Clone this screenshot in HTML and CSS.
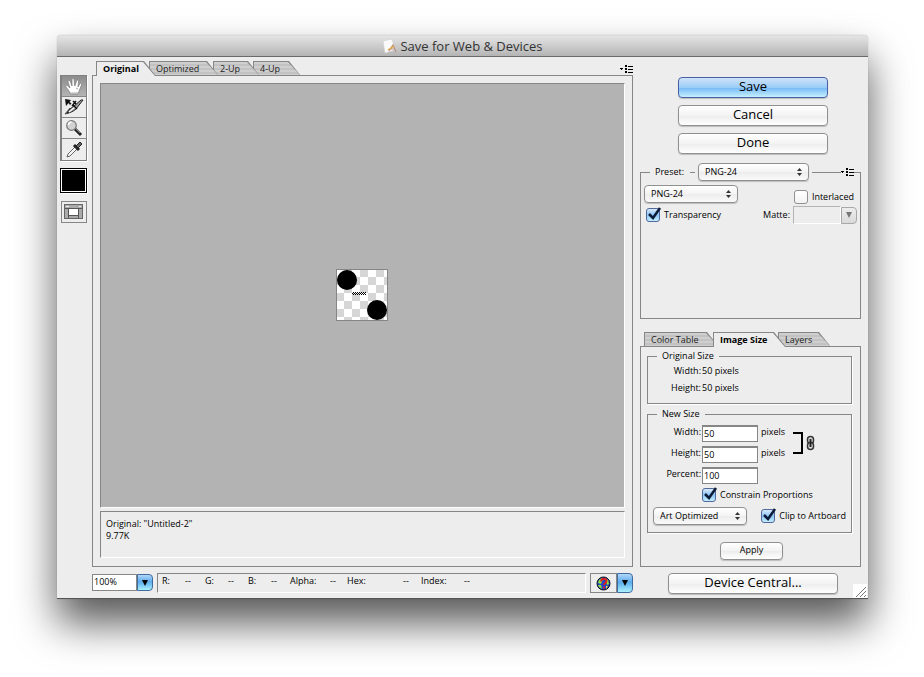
FILE: index.html
```
<!DOCTYPE html>
<html lang="en">

<head>
  <meta charset="UTF-8">
  <meta name="viewport" content="width=device-width, initial-scale=1">
  <title>Save for Web &amp; Devices</title>
  <link rel="stylesheet" href="styles.css">
</head>

<body>
  <div class="window">
    <header class="titlebar">
      <svg width="16" height="16" viewBox="0 0 16 16">
        <path d="M1 3l9-2 3 11-10 3z" fill="#fafafa" stroke="#d0d0d0" stroke-width=".6"/>
        <path d="M7 13l4-6 3 7M8 11h5" fill="none" stroke="#b09080" stroke-width="1.200"/>
        <path d="M6 12l6-4" stroke="#e9a43c" stroke-width="1.400"/>
      </svg>
      <h1>Save for Web &amp; Devices</h1>
    </header>

    <div class="content">
      <aside class="tools">
        <div class="tool-group">
          <button class="tool active" aria-label="Hand">
            <svg width="20" height="20" viewBox="0 0 20 20">
              <path d="M6 18l-1-3-3-4c-1-2 1-2.500 2-1l2 2-2-6c0-2 2-2 2.500 0l1.500 4V4c0-2 2-2 2.200 0l.6 6L12.500 5c.5-1.800 2.300-1 2 .8L14 11l1.600-3c1-1.500 2.500-.7 1.900 1L15.500 14 14 18z" fill="#fff" stroke="#777" stroke-width=".7"/>
              <path d="M6 17h8M12 12l2 1" stroke="#aaa" stroke-width="1"/>
            </svg>
          </button>
          <button class="tool" aria-label="Slice Select">
            <svg width="20" height="20" viewBox="0 0 20 20">
              <path d="M1 17l5-6 2 2-3 3z" fill="#999" stroke="#333" stroke-width=".8"/>
              <path d="M6 12l4-3 7-6 2 0-7 9c-2 2-6 4-9 4z" fill="#999" stroke="#222" stroke-width="1"/>
              <path d="M5 15l6-5" stroke="#fff" stroke-width="1.200"/>
              <path d="M1 2l6 1-1.500 2 2 1.500L6 8 4.500 6 2 9z" fill="#111"/>
              <path d="M9 4l3 3M12 4L8 9M9 8l4 4" stroke="#111" stroke-width="1.500"/>
            </svg>
          </button>
          <button class="tool" aria-label="Zoom">
            <svg width="20" height="20" viewBox="0 0 20 20">
              <path d="M11 11l6 6" stroke="#222" stroke-width="3"/>
              <path d="M12 11l4 4" stroke="#888" stroke-width="1"/>
              <circle cx="7.500" cy="7.500" r="4.800" fill="#d2d2d2" stroke="#777" stroke-width="1.200"/>
              <path d="M4.500 7c0-2 1.500-3 3-3" stroke="#fff" stroke-width="1.500" fill="none"/>
            </svg>
          </button>
          <button class="tool" aria-label="Eyedropper">
            <svg width="20" height="20" viewBox="0 0 20 20">
              <path d="M3 17l1-3 7-7 2 2-7 7z" fill="#f5f5f5" stroke="#555" stroke-width=".9"/>
              <path d="M10 5l5 5" stroke="#222" stroke-width="3"/>
              <path d="M12 6l4-4 2 2-4 4z" fill="#666" stroke="#222"/>
            </svg>
          </button>
        </div>
        <button class="swatch" aria-label="Eyedropper Color"></button>
        <button class="slices" aria-label="Toggle Slices Visibility">
          <svg width="20" height="16" viewBox="0 0 20 16">
            <rect x=".5" y=".5" width="18" height="14" fill="#aaa" stroke="#666"/>
            <path d="M1 4.500h17M4.500 4v10M14.500 4v10M5 11.500h9" stroke="#555"/>
            <path d="M2 2.500h3M15 2.500h2" stroke="#eee"/>
            <rect x="5" y="5" width="9" height="6" fill="#fff"/>
          </svg>
        </button>
      </aside>

      <main class="main">
        <div class="tabs">
          <button class="tab tab1 active">Original</button>
          <button class="tab tab2">Optimized</button>
          <button class="tab tab3">2-Up</button>
          <button class="tab tab4">4-Up</button>
          <button class="menu-icon" aria-label="Preview menu">
            <svg width="13" height="9" viewBox="0 0 13 9">
              <path d="M0 3h3v1H2v1H1V4H0z"/>
              <path d="M5 0h2v2H5zM5 3h2v2H5zM5 6h2v2H5zM8 1h5v1H8zM8 4h5v1H8zM8 7h5v1H8z"/>
            </svg>
          </button>
        </div>
        <section class="preview-panel">
          <div class="canvas">
            <svg width="52" height="52" viewBox="0 0 52 52">
              <defs>
                <pattern id="checks" width="16" height="16" patternUnits="userSpaceOnUse">
                  <rect width="16" height="16" fill="#fff"/>
                  <path d="M8 0h8v8H8zM0 8h8v8H0z" fill="#d6d6d6"/>
                </pattern>
                <pattern id="dots" width="2" height="2" patternUnits="userSpaceOnUse">
                  <path d="M0 0h1v1H0zM1 1h1v1H1z"/>
                </pattern>
              </defs>
              <rect width="52" height="52" fill="url(#checks)"/>
              <rect x=".5" y=".5" width="51" height="51" fill="none" stroke="#868686"/>
              <circle cx="11" cy="11" r="10"/>
              <circle cx="41" cy="41" r="10"/>
              <rect x="16" y="23" width="14" height="3" fill="url(#dots)"/>
            </svg>
          </div>
          <div class="info">
            <p>Original: "Untitled-2"</p>
            <p>9.77K</p>
          </div>
        </section>
        <div class="status-row">
          <div class="zoom">
            <input type="text" value="100%" aria-label="Zoom level">
            <button class="drop" aria-label="Zoom levels">
              <svg width="6" height="6" viewBox="0 0 6 6"><path d="M0 0h6L3 6z"/></svg>
            </button>
          </div>
          <div class="readout">
            <span>R:</span><span>--</span>
            <span>G:</span><span>--</span>
            <span>B:</span><span>--</span>
            <span>Alpha:</span><span>--</span>
            <span>Hex:</span><span>--</span>
            <span>Index:</span><span>--</span>
          </div>
          <div class="browser">
            <button class="globe" aria-label="Preview in browser">
              <svg width="15" height="15" viewBox="0 0 15 15">
                <circle cx="7.500" cy="7.500" r="6.500" fill="#2345c8" stroke="#111"/>
                <path d="M2 7l1-3 3-2 1 1-2 5zM9 2l3 2 1 4-2 1zM2 9l3 0 1 4-3-2z" fill="#8fe03a"/>
                <path d="M10 10l2 0-2 3z" fill="#ffe23a"/>
                <path d="M5 5.500c0-3.500 5.500-3.500 5.500-.5 0 2-2.500 2-2.500 4M8 10.500v2" stroke="#e81818" stroke-width="1.800" fill="none"/>
              </svg>
            </button>
            <button class="drop" aria-label="Select browser">
              <svg width="6" height="6" viewBox="0 0 6 6"><path d="M0 0h6L3 6z"/></svg>
            </button>
          </div>
        </div>
      </main>

      <aside class="side">
        <div class="actions">
          <button class="btn default">Save</button>
          <button class="btn">Cancel</button>
          <button class="btn">Done</button>
        </div>

        <fieldset class="preset">
          <legend>
            <label for="preset">Preset:</label>
            <span class="dash"></span>
            <span class="select wide">
              <select id="preset"><option>PNG-24</option></select>
              <svg width="5" height="8" viewBox="0 0 5 8"><path d="M0 3L2.500 0 5 3zM0 5h5L2.500 8z"/></svg>
            </span>
          </legend>
          <button class="menu-icon preset-menu" aria-label="Preset menu">
            <svg width="13" height="9" viewBox="0 0 13 9">
              <path d="M0 3h3v1H2v1H1V4H0z"/>
              <path d="M5 0h2v2H5zM5 3h2v2H5zM5 6h2v2H5zM8 1h5v1H8zM8 4h5v1H8zM8 7h5v1H8z"/>
            </svg>
          </button>
          <div class="preset-row">
            <span class="select">
              <select aria-label="File format"><option>PNG-24</option></select>
              <svg width="5" height="8" viewBox="0 0 5 8"><path d="M0 3L2.500 0 5 3zM0 5h5L2.500 8z"/></svg>
            </span>
            <label class="check interlaced"><span class="box"><input type="checkbox"></span>Interlaced</label>
          </div>
          <div class="preset-row">
            <label class="check">
              <span class="box">
                <input type="checkbox" checked>
                <svg width="17" height="16" viewBox="0 0 17 16"><path d="M3 7l4 4L14 1" fill="none" stroke="#0c1c38" stroke-width="2.500"/></svg>
              </span>Transparency
            </label>
            <div class="matte">
              <label for="matte">Matte:</label>
              <input id="matte" type="text" disabled>
              <button class="drop" aria-label="Matte colors" disabled>
                <svg width="6" height="6" viewBox="0 0 6 6"><path d="M0 0h6L3 6z"/></svg>
              </button>
            </div>
          </div>
        </fieldset>

        <div class="tabs side-tabs">
          <button class="tab side-tab1">Color Table</button>
          <button class="tab side-tab2 active">Image Size</button>
          <button class="tab side-tab3">Layers</button>
        </div>
        <section class="size-panel">
          <fieldset class="group original">
            <legend>Original Size</legend>
            <p><span>Width:</span>50 pixels</p>
            <p><span>Height:</span>50 pixels</p>
          </fieldset>
          <fieldset class="group">
            <legend>New Size</legend>
            <div class="size-fields">
              <div class="size-inputs">
                <div class="field"><label for="width">Width:</label><input id="width" type="text" value="50"><span>pixels</span></div>
                <div class="field"><label for="height">Height:</label><input id="height" type="text" value="50"><span>pixels</span></div>
                <div class="field"><label for="percent">Percent:</label><input id="percent" type="text" value="100"></div>
              </div>
              <svg class="link" width="23" height="24" viewBox="0 0 23 24">
                <path d="M0 2h9v20H0" fill="none" stroke="#000" stroke-width="2"/>
                <rect x="14.500" y="5.500" width="6" height="7" rx="3" fill="#ddd" stroke="#333" stroke-width="1.500"/>
                <rect x="14.500" y="11.500" width="6" height="7" rx="3" fill="#ddd" stroke="#333" stroke-width="1.500"/>
                <path d="M17.500 8v8" stroke="#222" stroke-width="2"/>
              </svg>
            </div>
            <label class="check constrain">
              <span class="box">
                <input type="checkbox" checked>
                <svg width="17" height="16" viewBox="0 0 17 16"><path d="M3 7l4 4L14 1" fill="none" stroke="#0c1c38" stroke-width="2.500"/></svg>
              </span>Constrain Proportions
            </label>
            <div class="clip-row">
              <span class="select">
                <select aria-label="Anti-aliasing"><option>Art Optimized</option></select>
                <svg width="5" height="8" viewBox="0 0 5 8"><path d="M0 3L2.500 0 5 3zM0 5h5L2.500 8z"/></svg>
              </span>
              <label class="check">
                <span class="box">
                  <input type="checkbox" checked>
                  <svg width="17" height="16" viewBox="0 0 17 16"><path d="M3 7l4 4L14 1" fill="none" stroke="#0c1c38" stroke-width="2.500"/></svg>
                </span>Clip to Artboard
              </label>
            </div>
          </fieldset>
          <button class="btn apply">Apply</button>
        </section>
        <button class="btn device">Device Central...</button>
      </aside>
    </div>
    <svg class="grip" width="14" height="14" viewBox="0 0 14 14">
      <path d="M0 0h14v14H0z" fill="#fff"/>
      <path d="M3 13L13 3M7 13l6-6M11 13l2-2" stroke="#777" stroke-width="1"/>
    </svg>
  </div>
</body>

</html>
```
FILE: styles.css
```
* {
  box-sizing: border-box;
}

body {
  display: flex;
  min-height: 100vh;
  margin: 0;
  padding: 35px 56px 78px 57px;
  background-color: #fff;
  font-family: "Open Sans", sans-serif;
  font-size: 9px;
  line-height: 12px;
  color: #000;
}

button, input, select {
  margin: 0;
  padding: 0;
  border: 0;
  font: inherit;
  color: inherit;
}

p, h1, fieldset, legend {
  margin: 0;
  padding: 0;
}

svg {
  display: block;
}

.window {
  position: relative;
  display: flex;
  flex-direction: column;
  flex: 1;
  background-color: #ededed;
  border-bottom: 1px solid #555;
  border-radius: 4px 4px 0 0;
  box-shadow: 0 0 1px rgba(0, 0, 0, .4), 0 24px 42px rgba(0, 0, 0, .66);
}

.titlebar {
  display: flex;
  align-items: center;
  justify-content: center;
  gap: 2px;
  height: 22px;
  border-top: 1px solid #dcdcdc;
  border-bottom: 1px solid #6a6a6a;
  border-radius: 4px 4px 0 0;
  background: linear-gradient(#e4e4e4, #b4b4b4);
}

.titlebar h1 {
  font-size: 13px;
  font-weight: normal;
  line-height: 18px;
  color: #333;
}

.content {
  display: flex;
  flex: 1;
  padding: 4px 7px 4px 3px;
}

/* tools */
.tools {
  width: 32px;
  padding-top: 14px;
}

.tool-group {
  width: 27px;
  border: 1px solid #808080;
  border-left-width: 2px;
  box-shadow: 1px 1px 0 #fff;
}

.tool {
  display: flex;
  align-items: center;
  justify-content: center;
  width: 24px;
  height: 21px;
  background-color: #ededed;
  border-bottom: 1px solid #868686;
}

.tool:last-child {
  border-bottom: 0;
}

.tool.active {
  background: linear-gradient(#8c8c8c, #b4b4b4);
}

.swatch {
  display: block;
  width: 27px;
  height: 25px;
  margin-top: 7px;
  border: 1px solid #000;
  background-color: #000;
  box-shadow: inset 0 0 0 1px #fff, 1px 1px 0 #fff;
}

.slices {
  display: flex;
  align-items: center;
  justify-content: center;
  width: 26px;
  height: 22px;
  margin: 8px 0 0 1px;
  border: 1px solid #868686;
  background-color: #ededed;
}

/* tabs */
.tabs {
  display: flex;
  height: 15px;
  padding-left: 4px;
  margin-bottom: -1px;
  position: relative;
}

.tab {
  position: relative;
  z-index: 1;
  height: 15px;
  padding-left: 7px;
  text-align: left;
  line-height: 15px;
  white-space: nowrap;
  background-color: #868686;
  color: #222;
  clip-path: polygon(0 0, calc(100% - 12px) 0, 100% 100%, 0 100%);
}

.tab::before {
  content: "";
  position: absolute;
  inset: 1px;
  z-index: -1;
  background: repeating-linear-gradient(#cfcfcf 0 2px, #c2c2c2 2px 4px);
  clip-path: polygon(0 0, calc(100% - 12px) 0, 100% 100%, 0 100%);
}

.tab.active {
  z-index: 5;
  font-weight: bold;
  color: #000;
}

.tab.active::before {
  bottom: 0;
  background: #ededed;
}

.tab1 {
  width: 60px;
  margin-right: -7px;
}

.tab2 {
  z-index: 3;
  width: 70px;
  margin-right: -6px;
}

.tab3 {
  z-index: 2;
  width: 47px;
  margin-right: -7px;
}

.tab4 {
  width: 48px;
}

.menu-icon {
  margin: 4px 0 0 auto;
  align-self: flex-start;
  background-color: #ededed;
}

/* preview */
.main {
  display: flex;
  flex: 1;
  flex-direction: column;
  margin-right: 7px;
}

.preview-panel {
  display: flex;
  flex: 1;
  flex-direction: column;
  gap: 3px;
  padding: 7px 7px 8px;
  border: 1px solid #868686;
}

.canvas {
  display: flex;
  flex: 1;
  align-items: center;
  justify-content: center;
  padding: 0 2px 2px 0;
  background-color: #b3b3b3;
  border: 1px solid #868686;
  border-right-color: #fff;
  border-bottom-color: #fff;
}

.info {
  height: 47px;
  padding: 6px 5px;
  border: 1px solid #868686;
  border-right-color: #fff;
  border-bottom-color: #fff;
}

.status-row {
  display: flex;
  align-items: flex-start;
  gap: 4px;
  height: 21px;
  margin-top: 6px;
}

.zoom, .browser {
  display: flex;
}

.zoom {
  margin-top: 1px;
}

.zoom input {
  width: 45px;
  height: 17px;
  padding: 0 0 2px 1px;
  background-color: #fff;
  border: 1px solid #868686;
}

.drop {
  display: flex;
  align-items: center;
  justify-content: center;
  width: 16px;
  height: 17px;
  border: 1px solid #3f6c9c;
  border-radius: 0 4px 4px 0;
  background: linear-gradient(#b2d6fb, #5cabec 45%, #a9f0fd);
}

.drop:disabled {
  border-color: #a8a8a8;
  background: linear-gradient(#ededed, #dadada);
  fill: #777;
}

.readout {
  display: grid;
  flex: 1;
  grid-template-columns: 23px 20px 23px 20px 23px 19px 40px 17px 56px 18px 43px auto;
  height: 20px;
  padding: 1px 4px;
  border: 1px solid #868686;
  border-right-color: #fff;
  border-bottom-color: #fff;
}

.globe {
  display: flex;
  align-items: center;
  justify-content: center;
  width: 27px;
  height: 20px;
  background-color: #ededed;
  border: 1px solid #868686;
}

.browser .drop {
  height: 20px;
}

/* right column */
.side {
  display: flex;
  flex-direction: column;
  width: 221px;
}

.actions {
  display: flex;
  flex-direction: column;
  gap: 7px;
  margin: 16px 33px 9px 38px;
}

.btn {
  height: 21px;
  padding-bottom: 2px;
  border: 1px solid #909090;
  border-radius: 4px;
  background: linear-gradient(#fff, #f3f3f3 50%, #ececec 50%, #fff);
  box-shadow: 0 1px 1px rgba(0, 0, 0, .2);
  font-size: 13px;
  line-height: 17px;
}

.btn.default {
  border-color: #4a5fa5;
  background: linear-gradient(#cfe3f9, #9accf8 50%, #74b7f6 50%, #c4f0ff);
}

.preset {
  position: relative;
  min-width: 0;
  height: 156px;
  margin-bottom: 13px;
  padding: 4px 3px 0;
  border: 1px solid #868686;
}

.preset legend {
  display: flex;
  align-items: center;
  margin-left: 6px;
  padding: 0 3px;
}

.preset label {
  margin-left: 2px;
}

.dash {
  width: 5px;
  height: 1px;
  margin: 0 3px 0 6px;
  background-color: #868686;
}

.preset-menu {
  position: absolute;
  top: -13px;
  right: 6px;
  margin: 0;
}

.preset-row {
  display: flex;
  align-items: center;
  justify-content: space-between;
  height: 18px;
  margin-bottom: 3px;
}

.select {
  display: grid;
  align-items: center;
  width: 94px;
}

.select.wide {
  width: 111px;
}

.select select, .select svg {
  grid-area: 1 / 1;
}

.select svg {
  justify-self: end;
  margin-right: 7px;
  pointer-events: none;
  fill: #333;
}

.select select {
  width: 100%;
  height: 18px;
  padding-left: 6px;
  appearance: none;
  border: 1px solid #909090;
  border-radius: 4px;
  background: linear-gradient(#fff, #f3f3f3 50%, #ececec 50%, #fafafa);
  box-shadow: 0 1px 1px rgba(0, 0, 0, .2);
}

.check {
  display: flex;
  align-items: center;
  gap: 4px;
  white-space: nowrap;
}

.preset .check {
  margin-left: 2px;
}

.preset .interlaced {
  margin: 6px 3px 0 0;
}

.box {
  position: relative;
  width: 14px;
  height: 14px;
}

.box input {
  display: block;
  width: 14px;
  height: 14px;
  appearance: none;
  border: 1px solid #909090;
  border-radius: 3px;
  background: linear-gradient(#fff, #f3f3f3);
}

.box input:checked {
  border-color: #50689c;
  background: linear-gradient(#d8eafc, #8cc4f6 50%, #c4eeff);
}

.box svg {
  position: absolute;
  left: 0;
  top: -1px;
  pointer-events: none;
}

.matte {
  display: flex;
  align-items: center;
}

.matte input {
  width: 48px;
  height: 18px;
  margin-left: 3px;
  background-color: #ededed;
  border: 1px solid #b4b4b4;
  border-right-color: #fff;
  border-bottom-color: #fff;
}

/* image size */
.side-tab1 {
  width: 75px;
  margin-right: -6px;
}

.side-tab2 {
  width: 73px;
  margin-right: -8px;
}

.side-tab3 {
  width: 53px;
}

.size-panel {
  display: flex;
  flex-direction: column;
  flex: 1;
  padding: 3px 8px 6px 6px;
  border: 1px solid #868686;
}

.group {
  min-width: 0;
  height: 125px;
  padding: 5px 5px 0;
  border: 1px solid #868686;
  box-shadow: 1px 1px 0 #fff;
}

.group legend {
  margin-left: 4px;
  padding: 0 5px;
}

.group.original {
  height: 54px;
  margin-bottom: 4px;
  padding: 1px 0 0;
}

.group.original legend {
  margin-left: 9px;
}

.original p {
  display: flex;
  height: 17px;
  gap: 1px;
  line-height: 16px;
}

.original span {
  width: 53px;
  text-align: right;
}

.size-fields {
  display: flex;
}

.size-inputs {
  width: 140px;
}

.field {
  display: flex;
  gap: 1px;
  height: 21px;
  line-height: 14px;
}

.field label {
  width: 48px;
  text-align: right;
}

.field input {
  width: 56px;
  height: 17px;
  padding: 0 0 2px 1px;
  border: 1px solid #868686;
  border-top-width: 2px;
  background-color: #fff;
}

.field span {
  margin-left: 2px;
}

.link {
  margin-top: 6px;
}

.constrain {
  margin-left: 49px;
}

.clip-row {
  display: flex;
  justify-content: space-between;
  margin-top: 5px;
}

.apply {
  width: 63px;
  height: 18px;
  margin: auto 71px 0 73px;
  font-size: 9px;
  line-height: 14px;
}

.device {
  margin: 6px 23px 0 28px;
}

.grip {
  position: absolute;
  right: 1px;
  bottom: 0;
}
```
